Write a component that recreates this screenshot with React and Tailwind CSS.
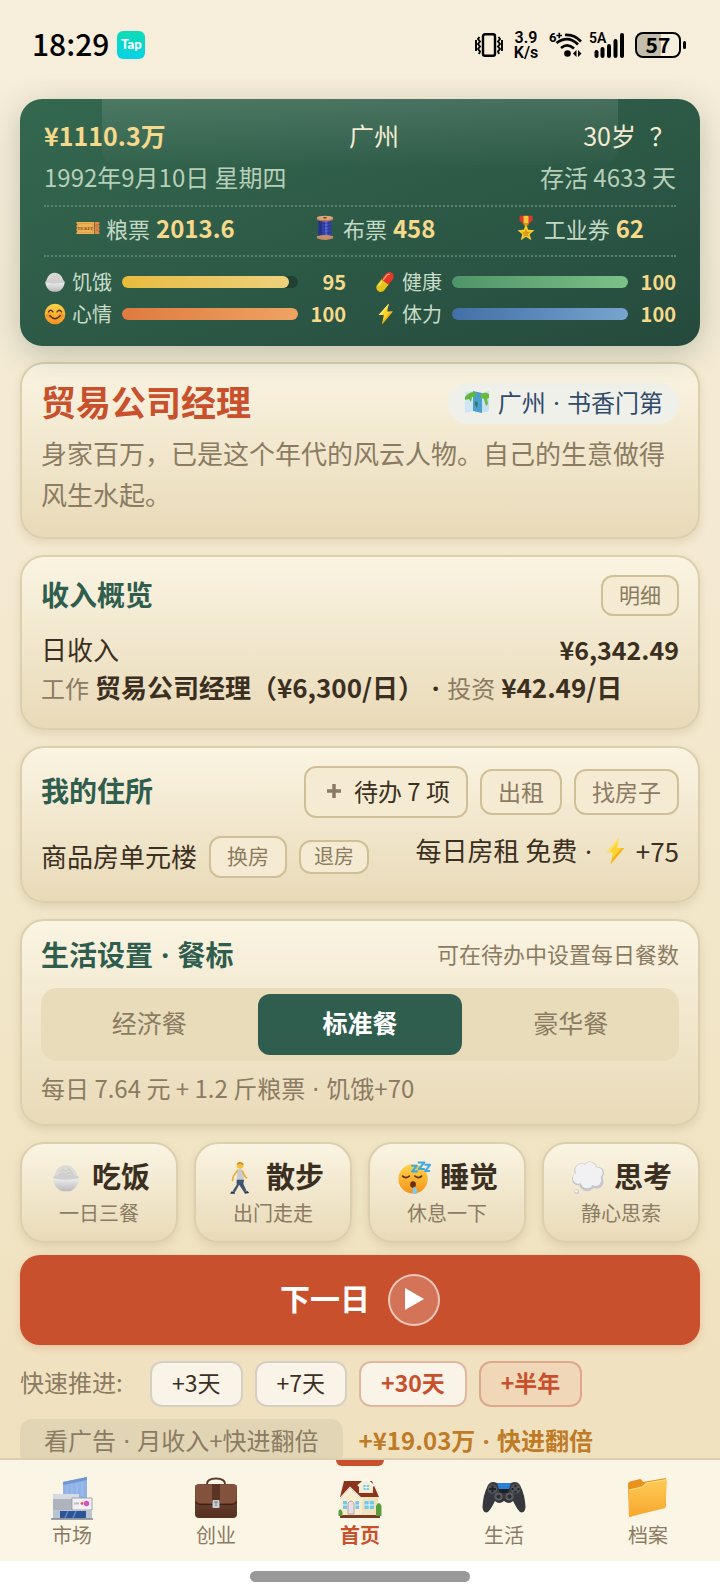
import React from "react";

const font = "font-['Noto_Sans_CJK_SC','Noto_Sans',sans-serif]";

function Rice({ className }) {
  return (
    <svg viewBox="0 0 32 32" className={className} aria-hidden="true">
      <defs>
        <linearGradient id="bowl" x1="0" y1="0" x2="0" y2="1">
          <stop offset="0" stopColor="#f1f1f1" />
          <stop offset="1" stopColor="#b9b9bb" />
        </linearGradient>
      </defs>
      <path d="M3.500 15C4.500 8 9 2.500 15 2.500C22 2 27 8 28.500 15Z" fill="#dcdad6" />
      <path d="M10 9l3-2 3 2 3-3 3 4M8 13l4-2 4 1 4-2 4 2" stroke="#c3c1bc" strokeWidth="1" fill="none" />
      <ellipse cx="16" cy="15.500" rx="14" ry="3.200" fill="#cfced0" />
      <path d="M2 15.500C5 18.500 27 18.500 30 15.500C30 22 26.500 27 21.500 29.500Q16 31 10.500 29.500C5.500 27 2 22 2 15.500Z" fill="url(#bowl)" />
    </svg>
  );
}

function Ticket({ className }) {
  return (
    <svg viewBox="0 0 48 32" className={className} aria-hidden="true">
      <path d="M1 4H36V28H1V25L3 23 1 21V18L3 16 1 14V11L3 9 1 7Z" fill="#eeb254" />
      <path d="M37 4H47V7L45 9 47 11V14L45 16 47 18V21L45 23 47 25V28H37Z" fill="#e08a45" />
      <rect x="4" y="7" width="29" height="18" fill="none" stroke="#d4933c" />
      <path d="M36.500 4V28" stroke="#7c5233" strokeDasharray="2 2" />
      <circle cx="42" cy="11" r="2.200" fill="none" stroke="#a45d2d" />
      <path d="M40 18h4M40 21h4" stroke="#a45d2d" />
      <text x="18.500" y="19" textAnchor="middle" fontSize="8" fontWeight="700" fill="#704424" fontFamily="Liberation Serif">TICKET</text>
    </svg>
  );
}

function Thread({ className }) {
  return (
    <svg viewBox="0 0 24 32" className={className} aria-hidden="true">
      <path d="M4 5H20V27H4Z" fill="#3542a8" />
      <path d="M4 5H8V27H4Z" fill="#26318a" />
      <path d="M12 5H15V27H12Z" fill="#5868d2" />
      <path d="M4 9Q12 12 20 9M4 13Q12 16 20 13M4 17Q12 20 20 17M4 21Q12 24 20 21" stroke="#242f86" strokeWidth=".7" fill="none" />
      <path d="M2 3.500V6Q12 10 22 6V3.500Z" fill="#b4774f" />
      <ellipse cx="12" cy="3.500" rx="10" ry="2.700" fill="#dda77c" />
      <ellipse cx="12" cy="3.500" rx="2.500" ry="1" fill="#6b3d25" />
      <path d="M2 26Q12 23 22 26V28.500Q12 33 2 28.500Z" fill="#c68d66" />
    </svg>
  );
}

function Medal({ className }) {
  return (
    <svg viewBox="0 0 24 32" className={className} aria-hidden="true">
      <path d="M4 1H20V7L15 11H9L4 7Z" fill="#d63a2c" />
      <path d="M9 1H15V11H9Z" fill="#f6c63a" />
      <path d="M9 10H15V13H9Z" fill="#c99019" />
      <path d="M12 11L14.800 18.200 22.500 18.700 16.500 23.600 18.500 31 12 26.800 5.500 31 7.500 23.600 1.500 18.700 9.200 18.200Z" fill="#fbd02f" />
      <path d="M12 16L13.500 20.500 18 20.700 14.500 23.400 15.700 27.500 12 25.200 8.300 27.500 9.500 23.400 6 20.700 10.500 20.500Z" fill="#d99a16" />
    </svg>
  );
}

function Smile({ className }) {
  return (
    <svg viewBox="0 0 32 32" className={className} aria-hidden="true">
      <defs>
        <linearGradient id="face" x1="0" y1="0" x2="0" y2="1">
          <stop offset="0" stopColor="#ffd54a" />
          <stop offset="1" stopColor="#f5931e" />
        </linearGradient>
      </defs>
      <circle cx="16" cy="16" r="15" fill="url(#face)" />
      <circle cx="7" cy="18" r="3.500" fill="#f8702c" opacity=".5" />
      <circle cx="25" cy="18" r="3.500" fill="#f8702c" opacity=".5" />
      <path d="M6.500 13Q9.500 8 13 13M19 13Q22.500 8 25.500 13" stroke="#5b3210" strokeWidth="2" fill="none" strokeLinecap="round" />
      <path d="M8.500 18.500Q16 27 23.500 18.500" stroke="#5b3210" strokeWidth="2.200" fill="none" strokeLinecap="round" />
    </svg>
  );
}

function Pill({ className }) {
  return (
    <svg viewBox="0 0 32 32" className={className} aria-hidden="true">
      <g transform="rotate(38 16 16)">
        <path d="M9.500 16V6a6.500 6.500 0 0 1 13 0V16Z" fill="#e23a24" />
        <path d="M9.500 16v10a6.500 6.500 0 0 0 13 0V16Z" fill="#e5c21c" />
        <path d="M12 15V6.500q.5-3 3-3.500" stroke="#ff9c86" strokeWidth="1.800" fill="none" />
        <path d="M12 18V26" stroke="#fff08a" strokeWidth="1.800" />
      </g>
    </svg>
  );
}

function Bolt({ className }) {
  return (
    <svg viewBox="0 0 24 32" className={className} aria-hidden="true">
      <path d="M16.500 1L2 17.500H9.500L7 31 22.500 12.500H14.500Z" fill="#fcd22c" />
      <path d="M16.500 1L2 17.500H5.500L16.500 4Z" fill="#fbe36b" />
      <path d="M7 31L22.500 12.500H19.500L9 25Z" fill="#f0b216" />
    </svg>
  );
}

function MapIcon({ className }) {
  return (
    <svg viewBox="0 0 26 24" className={className} aria-hidden="true">
      <path d="M1 2L9 1V21L1 23Z" fill="#cfe6f4" />
      <path d="M9 1L18 3V23L9 21Z" fill="#4b9fd0" />
      <path d="M18 3L25 1V21L18 23Z" fill="#c3e0f1" />
      <path d="M1 7Q5 2 10 2L13 4 11 7 8 7 7 12 5 9 1 10Z" fill="#63b63b" />
      <path d="M16 5Q20 1 25 4V8L23 9 24 14 22 16 20 9 17 8Z" fill="#6ab93f" />
      <path d="M11 11L14 13 13 18 11 15Z" fill="#277f58" />
    </svg>
  );
}

function Walker({ className }) {
  return (
    <svg viewBox="0 0 24 40" className={className} aria-hidden="true">
      <circle cx="12" cy="5" r="4" fill="#f3bf43" />
      <path d="M8 4Q9 0 13 1Q17 2 16 5L13 3Z" fill="#c98a22" />
      <path d="M9 10Q13 8 16 11L17 23H8Z" fill="#c8cbd2" />
      <path d="M9 11L4 18 3 23" stroke="#e9ad39" strokeWidth="2" fill="none" strokeLinecap="round" />
      <path d="M15 12L18 18 20 20" stroke="#e9ad39" strokeWidth="2" fill="none" strokeLinecap="round" />
      <path d="M8 22H17L16 27 20 36 17 37 11 28 6 37 3 36 8 28Z" fill="#40536f" />
      <path d="M2 36L6 37.500V39H0Z M17 37L21 35.500 23 38 18 39Z" fill="#28324a" />
    </svg>
  );
}

function Sleepy({ className }) {
  return (
    <svg viewBox="0 0 36 36" className={className} aria-hidden="true">
      <circle cx="17" cy="19" r="15.500" fill="url(#face)" />
      <path d="M6 16Q9 19 13 16M19 16Q23 19 26 16" stroke="#5b3210" strokeWidth="1.800" fill="none" strokeLinecap="round" />
      <ellipse cx="17" cy="25" rx="3" ry="3.500" fill="#6b2f10" />
      <path d="M18 27Q22 29 21 35H17Q16 30 18 27Z" fill="#7ecbf2" />
      <path d="M15 5H21L16 11H22M22 1.500H29L23 8.500H29.500M29 4H35L30 10.500H35" stroke="#3fa9e6" strokeWidth="2.200" fill="none" strokeLinejoin="round" />
    </svg>
  );
}

function Thought({ className }) {
  return (
    <svg viewBox="0 0 36 36" className={className} aria-hidden="true">
      <g fill="#c6c7cd">
        <circle cx="11" cy="10" r="7.500" />
        <circle cx="20" cy="8" r="7.500" />
        <circle cx="28" cy="13" r="7" />
        <circle cx="27" cy="22" r="7.500" />
        <circle cx="17" cy="24" r="8" />
        <circle cx="8" cy="19" r="7" />
        <circle cx="6" cy="32.500" r="2.500" />
      </g>
      <g fill="#f1f1f4">
        <circle cx="11" cy="9.500" r="6.500" />
        <circle cx="20" cy="7.500" r="6.500" />
        <circle cx="27.500" cy="12.500" r="6" />
        <circle cx="26" cy="20.500" r="6" />
        <circle cx="17" cy="22" r="6.800" />
        <circle cx="8" cy="18" r="6" />
        <circle cx="18" cy="14" r="8" />
        <circle cx="5.700" cy="32" r="1.500" />
      </g>
    </svg>
  );
}

function Market() {
  return (
    <svg viewBox="0 0 44 44" className="size-11" aria-hidden="true">
      <path d="M13 6L37 1V22H13Z" fill="#8fb3e6" />
      <path d="M13 6L37 1V4L13 9Z" fill="#6f95d2" />
      <path d="M17 9V20M22 8V20M27 7V20M32 6V20" stroke="#9dbcec" strokeWidth="1.500" />
      <path d="M3 18L29 18V24H3Z" fill="#d6dae2" />
      <path d="M3 23H22V34H3Z" fill="#aeb3be" />
      <path d="M22 22H42V34H22Z" fill="#f4eff4" stroke="#8f94a0" strokeWidth=".8" />
      <path d="M24 27.500H29" stroke="#b6bec9" strokeWidth="2" />
      <circle cx="32" cy="27.500" r="1.400" fill="#e2564e" />
      <circle cx="36.500" cy="27.500" r="2.700" fill="#d352c4" />
      <path d="M3 34H42V43H3Z" fill="#b9c3d2" />
      <path d="M10 35H36V42H10Z" fill="#2d5596" />
      <path d="M18 35L15 42M26 35L23 42" stroke="#5a86c4" strokeWidth="1.500" />
      <path d="M1 43H43" stroke="#7f8691" strokeWidth="1.500" />
    </svg>
  );
}

function Briefcase() {
  return (
    <svg viewBox="0 0 44 44" className="size-11" aria-hidden="true">
      <defs>
        <linearGradient id="leather" x1="0" y1="0" x2="0" y2="1">
          <stop offset="0" stopColor="#7b4c3a" />
          <stop offset="1" stopColor="#54301f" />
        </linearGradient>
      </defs>
      <path d="M13 8Q13 2.500 22 2.500T31 8" fill="none" stroke="#5e3a2b" strokeWidth="2" />
      <rect x="1" y="8" width="42" height="34" rx="4" fill="url(#leather)" />
      <path d="M1.500 9H42.500V23Q42 27 38 27H6Q2 27 1.500 23Z" fill="#83523d" />
      <path d="M1.500 26Q3 28.500 6 28.500H38Q41 28.500 42.500 26" stroke="#3d2014" strokeWidth="1.200" fill="none" />
      <path d="M18 8H26V28H18Z" fill="#5c3424" />
      <rect x="18.500" y="24" width="7" height="8" rx="1" fill="#c9ccd0" />
      <path d="M20 26H24M22 26V30" stroke="#7b7f85" />
    </svg>
  );
}

function House() {
  return (
    <svg viewBox="0 0 44 44" className="size-11" aria-hidden="true">
      <path d="M2 38H42V42H2Z" fill="#7a3a22" />
      <path d="M22 19H40V39H22Z" fill="#f1e3bd" />
      <path d="M6 5H34L41 21H2Z" fill="#8d3319" />
      <path d="M12 12L24 23V39H3V22Z" fill="#f7ecce" />
      <path d="M2 23L12 12 24.500 24" stroke="#fffaf0" strokeWidth="2" fill="none" />
      <path d="M2 23L12 12 24.500 24" stroke="#b9a583" strokeWidth=".5" fill="none" />
      <path d="M21 9L28 3 35 9V17H21Z" fill="#f7ecce" />
      <path d="M20 10L28 3 36 10" stroke="#fffaf0" strokeWidth="2" fill="none" />
      <path d="M25.500 9H31V14H25.500Z M5 25H9V33H5Z M17.500 25H21V33H17.500Z M26.500 25H36V33H26.500Z" fill="#72c8e8" />
      <path d="M28.200 9V14M25.500 11.500H31M5 29H9M17.500 29H21M31.200 25V33M26.500 29H36" stroke="#fff" strokeWidth=".8" />
      <path d="M10 27Q13 23 16 27V38H10Z" fill="#e7dde4" stroke="#a89496" strokeWidth=".8" />
      <path d="M38 40V30Q41 24 43.500 30V40Z M.500 40V35Q2.500 31 4.500 36V40Z" fill="#5a9b3c" />
    </svg>
  );
}

function Gamepad() {
  return (
    <svg viewBox="0 0 44 44" className="size-11" aria-hidden="true">
      <path d="M6 9Q9 4 15 7H29Q35 4 38 9Q43 19 43.500 31Q43 38 38 36Q35 33 31 25Q27 29 22 25Q17 29 13 25Q9 33 6 36Q1 38 .500 31Q1 19 6 9Z" fill="#36383d" />
      <path d="M15 7H29L27 13H17Z" fill="#2b7fd6" />
      <path d="M17 13H27L26 17H18Z" fill="#1d2026" />
      <circle cx="10.500" cy="13" r="5" fill="#505359" />
      <path d="M10.500 9.500V16.500M7 13H14" stroke="#22242a" strokeWidth="2" />
      <circle cx="33.500" cy="13" r="5" fill="#505359" />
      <path d="M33.500 9.200v1.600M33.500 15.200v1.600M29.700 13h1.600M35.700 13h1.600" stroke="#15171c" strokeWidth="2" />
      <circle cx="16.500" cy="20.500" r="4" fill="#5a5d63" />
      <circle cx="27.500" cy="20.500" r="4" fill="#5a5d63" />
      <circle cx="16.500" cy="20.500" r="2" fill="#2b2d32" />
      <circle cx="27.500" cy="20.500" r="2" fill="#2b2d32" />
    </svg>
  );
}

function Folder() {
  return (
    <svg viewBox="0 0 44 44" className="size-11" aria-hidden="true">
      <defs>
        <linearGradient id="folder" x1="0" y1="0" x2="0" y2="1">
          <stop offset="0" stopColor="#ffcb56" />
          <stop offset="1" stopColor="#f7a72e" />
        </linearGradient>
      </defs>
      <path d="M2 8Q2 6 4 5.500L14 3Q16 3 17 6L40 2V30L3 41Z" fill="#e9921d" />
      <path d="M3 14L16 11 20 7 41 3.500 39.500 32 3 41Z" fill="url(#folder)" />
      <path d="M3 14L16 11 20 7 41 3.500" stroke="#ffe08c" strokeWidth="1" fill="none" />
    </svg>
  );
}

function Dot() {
  return <span className="mx-[2px] font-['Noto_Sans',sans-serif]">·</span>;
}

function StatusBar() {
  return (
    <header className="flex h-[99px] shrink-0 items-start justify-between pt-7 pr-[34px] pl-8 text-black">
      <div className="flex h-[34px] items-center gap-2">
        <time className="pb-1 text-[30px] font-medium leading-[30px]">18:29</time>
        <span className="flex size-7 items-center justify-center rounded-md bg-linear-to-b from-[#0fdcb4] to-[#0ad2e6] font-['Lato',sans-serif] text-[13px] font-black text-white">Tap</span>
      </div>
      <div className="flex h-[34px] items-center gap-[10px]">
        <svg viewBox="0 0 28 24" className="h-6 w-7" fill="none" stroke="#000" aria-hidden="true">
          <rect x="8" y="1.200" width="12" height="21.500" rx="2" strokeWidth="2.400" />
          <path d="M4.500 4L3 6 5 8.500 3 11 5 13.500 3 16 5 18.500 4 21M1 7V18M23.500 4L25 6 23 8.500 25 11 23 13.500 25 16 23 18.500 24 21M27 7V18" strokeWidth="1.900" />
        </svg>
        <span className="flex w-[26px] flex-col items-center font-['Roboto',sans-serif] text-[16px] font-semibold leading-[15px]">
          <span>3.9</span>
          <span>K/s</span>
        </span>
        <svg viewBox="0 -2 34 32" className="h-8 w-[34px]" fontFamily="Roboto" aria-hidden="true">
          <text x="0" y="11" fontSize="13" fontWeight="700">6</text>
          <path d="M7.500 4.500H13M10.300 1.700V7.300" stroke="#000" strokeWidth="1.600" />
          <path d="M16 4Q25 3 32 10.500M7.500 12Q19 3.500 29 13.500M12 17Q18.500 11.500 25 17.500" stroke="#000" strokeWidth="2.600" fill="none" />
          <circle cx="18.500" cy="22.500" r="3.300" />
          <path d="M24 22.500L27.500 19V26ZM29 19V26L32.500 22.500Z" />
        </svg>
        <svg viewBox="0 -2 36 32" className="-ml-1 h-8 w-9" fontFamily="Roboto" aria-hidden="true">
          <text x="0" y="12" fontSize="14" fontWeight="600">5A</text>
          <path d="M7.500 25V21M13.500 25V18M20 25V15M26.500 25V10M33 25V4" stroke="#000" strokeWidth="4" strokeLinecap="round" />
        </svg>
        <span className="flex items-center gap-[2px]">
          <span className="flex h-[26px] w-[46px] items-center justify-center rounded-lg border-2 border-black bg-linear-to-r from-[#c5bdab] from-57% to-transparent to-57% pb-[2px] text-[21px] font-bold leading-[20px]">57</span>
          <span className="h-2 w-[3px] rounded-full bg-black" />
        </span>
      </div>
    </header>
  );
}

function Coupon({ icon, label, value }) {
  return (
    <div className="flex items-center gap-[6px]">
      <span className="flex w-6 justify-center">{icon}</span>
      <span className="text-[22px] text-[#c3d9c4]">{label}</span>
      <span className="text-[24px] font-bold text-[#f6d98a]">{value}</span>
    </div>
  );
}

function Meter({ icon, label, value, bar }) {
  return (
    <div className="flex h-8 items-center">
      <span className="flex w-[22px] justify-center">{icon}</span>
      <span className="ml-[6px] w-[50px] text-[20px] text-[#c9ddc9]">{label}</span>
      <div className="h-3 flex-1 rounded-full bg-[#1f4032]" role="meter" aria-label={label} aria-valuemin="0" aria-valuemax="100" aria-valuenow={value}>
        <div className={`h-full rounded-full ${bar}`} style={{ width: `${value}%` }} />
      </div>
      <span className="w-[48px] text-right text-[20px] font-bold text-[#f6d98a]">{value}</span>
    </div>
  );
}

function StatsCard() {
  return (
    <section className="relative rounded-[22px] bg-linear-to-br from-[#34684f] via-[#2d5a47] to-[#254a3d] px-6 pt-4 pb-4 shadow-[0_8px_32px_rgba(50,80,60,0.28)]">
      <div className="absolute top-0 right-[12%] left-[12%] h-[66px] rounded-b-2xl bg-linear-to-b from-white/12 to-white/1" />
      <div className="relative">
        <div className="grid h-10 grid-cols-3 items-center text-[25px] leading-8 text-[#f4ecd2]">
          <span className="font-bold text-[#f6d98a]">¥1110.3万</span>
          <span className="pl-7 text-center">广州</span>
          <span className="flex items-center justify-end gap-3">
            <span>30岁</span>
            <button type="button" aria-label="帮助" className="w-7">？</button>
          </span>
        </div>
        <div className="flex h-11 items-center justify-between text-[24px] text-[#b7cfb8]">
          <span>1992年9月10日 星期四</span>
          <span>存活 4633 天</span>
        </div>
        <div className="mt-[6px] flex h-[52px] items-center justify-between border-y-2 border-dotted border-[#5a806b] px-8 pb-[6px]">
          <Coupon icon={<Ticket className="h-[18px] w-6" />} label="粮票" value="2013.6" />
          <Coupon icon={<Thread className="h-[26px] w-6" />} label="布票" value="458" />
          <Coupon icon={<Medal className="h-[26px] w-6" />} label="工业券" value="62" />
        </div>
        <div className="mt-[9px] grid grid-cols-2 gap-x-7">
          <Meter icon={<Rice className="size-[22px]" />} label="饥饿" value={95} bar="bg-linear-to-r from-[#e8bb3c] to-[#eed17c]" />
          <Meter icon={<Pill className="size-[22px]" />} label="健康" value={100} bar="bg-linear-to-r from-[#4f9468] to-[#7cc188]" />
          <Meter icon={<Smile className="size-[22px]" />} label="心情" value={100} bar="bg-linear-to-r from-[#df7a40] to-[#efa362]" />
          <Meter icon={<Bolt className="h-[22px] w-[17px]" />} label="体力" value={100} bar="bg-linear-to-r from-[#426fa6] to-[#78a4cf]" />
        </div>
      </div>
    </section>
  );
}

function Card({ children }) {
  return (
    <section className="mt-4 rounded-3xl border-2 border-[#dccfae] bg-linear-to-b from-[#faf4e2] to-[#e9dab8] px-[19px] pt-[18px] pb-[21px] shadow-[0_4px_10px_rgba(120,95,40,0.14)]">
      {children}
    </section>
  );
}

function Chip({ className, children }) {
  return (
    <button type="button" className={`flex items-center justify-center border-2 border-[#cfc097] bg-[#f5ebd2] pb-[2px] text-[#8b7b62] ${className}`}>
      {children}
    </button>
  );
}

function Title({ children }) {
  return <h2 className="pb-1 text-[28px] font-bold leading-[30px] text-[#2f5d4e]">{children}</h2>;
}

const actions = [
  { icon: <Rice className="size-[30px]" />, label: "吃饭", note: "一日三餐" },
  { icon: <Walker className="h-[34px] w-5" />, label: "散步", note: "出门走走" },
  { icon: <Sleepy className="size-[34px]" />, label: "睡觉", note: "休息一下" },
  { icon: <Thought className="size-[34px]" />, label: "思考", note: "静心思索" },
];

const tabs = [
  { icon: <Market />, label: "市场" },
  { icon: <Briefcase />, label: "创业" },
  { icon: <House />, label: "首页", active: true },
  { icon: <Gamepad />, label: "生活" },
  { icon: <Folder />, label: "档案" },
];

const meals = ["经济餐", "标准餐", "豪华餐"];

export default function App() {
  return (
    <div className={`flex h-screen flex-col bg-linear-to-b from-[#f7eedc] via-[#f3e8cc] to-[#efe0bc] ${font} text-[#3b2f22]`}>
      <StatusBar />
      <main className="-mt-[99px] min-h-0 flex-1 overflow-hidden px-5 pt-[99px]">
        <StatsCard />

        <Card>
          <div className="flex h-[42px] items-center justify-between">
            <h1 className="pb-1 text-[35px] font-bold leading-[38px] text-[#c8502d]">贸易公司经理</h1>
            <span className="flex h-[41px] items-center gap-2 rounded-full bg-[#eff0ea] px-4 pb-[2px] text-[24px] text-[#2f4a6b]">
              <MapIcon className="h-6 w-[26px]" />
              <span>广州 <Dot /> 书香门第</span>
            </span>
          </div>
          <p className="mt-2 mb-[2px] text-[26px] leading-[41px] text-[#8b7b62]">身家百万，已是这个年代的风云人物。自己的生意做得风生水起。</p>
        </Card>

        <Card>
          <div className="flex h-[41px] items-center justify-between">
            <Title>收入概览</Title>
            <Chip className="h-[41px] w-[78px] rounded-xl text-[21px]">明细</Chip>
          </div>
          <div className="mt-[14px] flex items-center justify-between text-[26px] leading-[38px]">
            <span>日收入</span>
            <span className="text-[25px] font-bold">¥6,342.49</span>
          </div>
          <p className="whitespace-nowrap text-[26px] font-bold leading-[38px]">
            <span className="text-[24px] font-normal text-[#8b7b62]">工作</span> 贸易公司经理（¥6,300/日） <Dot />{" "}
            <span className="text-[24px] font-normal text-[#8b7b62]">投资</span> ¥42.49/日
          </p>
        </Card>

        <Card>
          <div className="flex h-[52px] items-center justify-between">
            <Title>我的住所</Title>
            <div className="flex items-center gap-3">
              <Chip className="h-[52px] gap-3 rounded-xl px-4 text-[24px]">
                <svg viewBox="0 0 16 16" className="ml-1 size-4" aria-hidden="true">
                  <path d="M8 1V15M1 8H15" stroke="#8b7b62" strokeWidth="3.500" />
                </svg>
                <span className="text-[#3b2f22]">待办 7 项</span>
              </Chip>
              <Chip className="h-[46px] rounded-xl px-4 text-[23px]">出租</Chip>
              <Chip className="h-[46px] rounded-xl px-4 text-[23px]">找房子</Chip>
            </div>
          </div>
          <div className="mt-[18px] flex h-11 items-start justify-between text-[26px]">
            <div className="flex h-[42px] items-center gap-3">
              <span className="pb-1">商品房单元楼</span>
              <Chip className="h-[42px] w-[78px] rounded-xl text-[21px]">换房</Chip>
              <Chip className="h-[34px] w-[70px] rounded-xl text-[20px]">退房</Chip>
            </div>
            <span className="flex items-center leading-7 whitespace-pre">
              <span>每日房租 免费 <Dot /> </span>
              <Bolt className="mx-1 h-[28px] w-[22px]" />
              <span> +75</span>
            </span>
          </div>
        </Card>

        <Card>
          <div className="flex items-center justify-between">
            <Title>生活设置 <Dot /> 餐标</Title>
            <span className="pb-2 text-[22px] leading-[26px] text-[#8b7b62]">可在待办中设置每日餐数</span>
          </div>
          <div className="mt-[14px] flex h-[73px] gap-[6px] rounded-2xl bg-[#e8dcbb] p-[6px]">
            {meals.map((m) => (
              <button
                key={m}
                type="button"
                aria-pressed={m === "标准餐"}
                className={`flex-1 rounded-xl pb-1 text-[25px] ${m === "标准餐" ? "bg-[#2f5d4e] font-bold text-white" : "text-[#8b7b62]"}`}
              >
                {m}
              </button>
            ))}
          </div>
          <p className="mt-[13px] text-[24px] leading-7 text-[#8b7b62]">每日 7.64 元 + 1.2 斤粮票 <Dot /> 饥饿+70</p>
        </Card>

        <div className="mt-4 grid grid-cols-4 gap-4">
          {actions.map((a) => (
            <button
              key={a.label}
              type="button"
              className="flex h-[101px] flex-col items-center rounded-3xl border-2 border-[#dccfae] bg-linear-to-b from-[#faf4e2] to-[#e9dab8] pt-[14px] shadow-[0_4px_10px_rgba(120,95,40,0.14)]"
            >
              <span className="flex h-10 items-center gap-2 text-[29px] font-bold">
                <span className="flex w-9 justify-center">{a.icon}</span>
                <span className="pb-1">{a.label}</span>
              </span>
              <span className="text-[20px] leading-[30px] text-[#8b7b62]">{a.note}</span>
            </button>
          ))}
        </div>

        <button type="button" className="mt-3 flex h-[90px] w-full items-center justify-center gap-[18px] rounded-[20px] bg-[#c8502d] text-[30px] font-bold text-white shadow-[0_3px_8px_rgba(200,80,45,0.22)]">
          <span className="pb-[6px]">下一日</span>
          <span className="flex size-[52px] items-center justify-center rounded-full border-2 border-white/60 bg-white/20">
            <svg viewBox="0 0 20 24" className="h-6 w-5" aria-hidden="true">
              <path d="M1 0L20 11 1 22Z" fill="#fff" />
            </svg>
          </span>
        </button>

        <div className="mt-4 flex h-[46px] items-center gap-3 text-[24px]">
          <span className="w-[118px] pb-1 text-[#8b7b62]">快速推进:</span>
          <button type="button" className="h-[46px] rounded-xl border-2 border-[#d5d0c3] bg-[#f9f3e8] px-5 pb-1 text-[23px]">+3天</button>
          <button type="button" className="h-[46px] rounded-xl border-2 border-[#d5d0c3] bg-[#f9f3e8] px-5 pb-1 text-[23px]">+7天</button>
          <button type="button" className="h-[46px] rounded-xl border-2 border-[#e2b7a0] bg-[#f9f3e8] px-5 pb-1 text-[23px] font-bold text-[#c8502d]">+30天</button>
          <button type="button" className="h-[46px] rounded-xl border-2 border-[#dfa78c] bg-[#efd7b8] px-5 pb-1 text-[23px] font-bold text-[#c8502d]">+半年</button>
        </div>

        <div className="mt-3 flex h-[46px] items-center gap-4 text-[24px]">
          <button type="button" className="h-[46px] rounded-xl bg-[#e2d5b5] px-6 pb-1 text-[#8b7b62]">看广告 <Dot /> 月收入+快进翻倍</button>
          <span className="pb-1 font-bold text-[#bf7a26]">+¥19.03万 <Dot /> 快进翻倍</span>
        </div>
      </main>

      <nav className="grid h-[103px] shrink-0 grid-cols-5 border-t-2 border-[#dccfae] bg-[#fbf5e6]">
        {tabs.map((t) => (
          <a
            key={t.label}
            href={`#${t.label}`}
            aria-current={t.active ? "page" : undefined}
            className={`relative flex flex-col items-center pt-4 text-[20px] leading-[30px] ${t.active ? "font-bold text-[#c8502d]" : "text-[#8b7b62]"}`}
          >
            {t.active && <span className="absolute top-0 h-[6px] w-12 rounded-b-md bg-[#c8502d]" />}
            {t.icon}
            <span>{t.label}</span>
          </a>
        ))}
      </nav>
      <div className="flex h-8 shrink-0 justify-center bg-white pt-[10px]">
        <span className="h-[11px] w-[220px] rounded-full bg-[#999]" />
      </div>
    </div>
  );
}
